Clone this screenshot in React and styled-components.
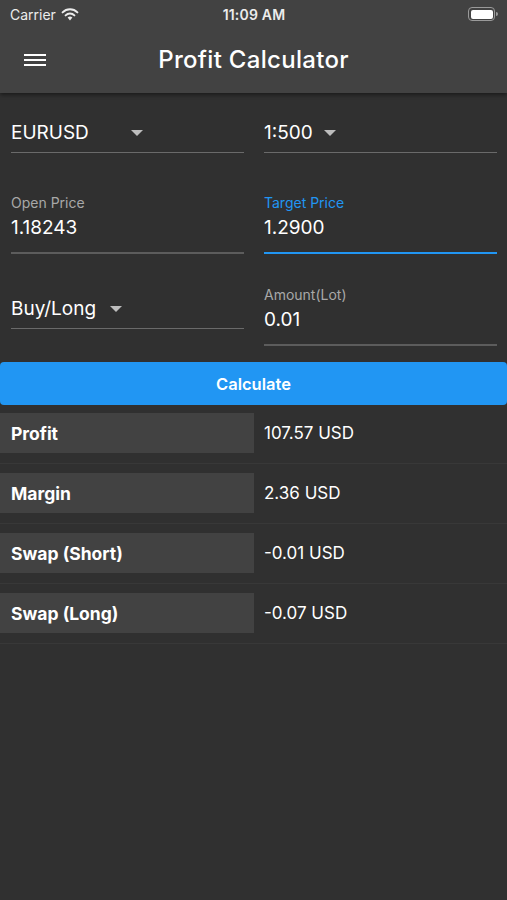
import React from 'react'
import styled, { createGlobalStyle } from 'styled-components'

const GlobalStyle = createGlobalStyle`
  html, body {
    margin: 0;
    padding: 0;
    background: #303030;
  }
  body {
    font-family: 'Inter', 'Roboto', sans-serif;
    color: #ffffff;
  }
`

const Screen = styled.div`
  width: 507px;
  min-height: 900px;
  background: #303030;
  display: flex;
  flex-direction: column;
`

const TopArea = styled.div`
  background: #424242;
  box-shadow: 0 2px 4px rgba(0, 0, 0, 0.45);
  position: relative;
  z-index: 1;
`

const StatusBar = styled.div`
  height: 28px;
  display: grid;
  grid-template-columns: 1fr auto 1fr;
  align-items: center;
  padding: 0 9px 0 10px;
  font-size: 14px;
  color: #ececec;
`

const Carrier = styled.div`
  display: flex;
  align-items: center;
  gap: 5px;
`

const Clock = styled.div`
  font-weight: 600;
  letter-spacing: 0.2px;
`

const Battery = styled.div`
  justify-self: end;
  display: flex;
  align-items: center;
`

const BatteryBody = styled.div`
  width: 22px;
  height: 9px;
  border: 1.5px solid #9a9a9a;
  border-radius: 4px;
  padding: 1.5px;
  display: flex;
`

const BatteryFill = styled.div`
  flex: 1;
  background: #ffffff;
  border-radius: 2px;
`

const BatteryNub = styled.div`
  width: 2px;
  height: 4px;
  margin-left: 1px;
  background: #9a9a9a;
  border-radius: 0 2px 2px 0;
`

const NavBar = styled.div`
  height: 65px;
  padding-bottom: 2px;
  box-sizing: border-box;
  display: grid;
  grid-template-columns: 70px 1fr 70px;
  align-items: center;
`

const MenuButton = styled.div`
  padding-left: 24px;
  display: flex;
  flex-direction: column;
  gap: 3px;

  span {
    display: block;
    width: 22px;
    height: 2px;
    background: #ffffff;
  }
`

const Title = styled.h1`
  margin: 0;
  text-align: center;
  font-size: 24px;
  font-weight: 500;
  letter-spacing: 0.3px;
  color: #ffffff;
`

const Form = styled.div`
  padding: 20px 10px 0 11px;
  display: flex;
  flex-direction: column;
`

const FieldRow = styled.div`
  display: grid;
  grid-template-columns: 1fr 1fr;
  column-gap: 20px;
  align-items: start;
  margin-top: ${({ gap }) => gap || 0}px;
`

const Select = styled.div`
  height: 39px;
  border-bottom: 1px solid #6a6a6a;
  display: flex;
  align-items: center;
  margin-top: ${({ offset }) => offset || 0}px;
  font-size: 19px;
  color: #ffffff;
`

const SelectText = styled.span`
  min-width: ${({ width }) => width}px;
`

const Caret = styled.span`
  margin-left: 8px;
  width: 0;
  height: 0;
  border-left: 6px solid transparent;
  border-right: 6px solid transparent;
  border-top: 6px solid #bdbdbd;
`

const TextField = styled.div`
  padding-bottom: 12px;
  border-bottom: 2px solid ${({ focused }) => (focused ? '#2196f3' : '#5c5c5c')};
  margin-top: ${({ offset }) => offset || 0}px;
`

const FieldLabel = styled.div`
  font-size: 14px;
  line-height: 17px;
  color: ${({ focused }) => (focused ? '#2196f3' : '#a8a8a8')};
`

const FieldValue = styled.div`
  margin-top: 5px;
  font-size: 19px;
  line-height: 24px;
  color: #ffffff;
`

const CalcButton = styled.button`
  margin-top: 16px;
  height: 43px;
  width: 100%;
  border: none;
  border-radius: 4px;
  background: #2196f3;
  color: #ffffff;
  font-family: 'Inter', 'Roboto', sans-serif;
  font-size: 16.5px;
  font-weight: 600;
  cursor: pointer;
`

const Results = styled.div`
  display: flex;
  flex-direction: column;
`

const ResultRow = styled.div`
  display: grid;
  grid-template-columns: 254px 1fr;
  align-items: center;
  padding: 8px 0 10px;
  border-bottom: 1px solid #383838;
  margin-bottom: 1px;
`

const ResultLabel = styled.div`
  height: 40px;
  background: #424242;
  display: flex;
  align-items: center;
  padding-left: 11px;
  font-size: 17.5px;
  font-weight: 700;
  color: #ffffff;
`

const ResultValue = styled.div`
  padding-left: 10px;
  font-size: 17px;
  color: #ffffff;
`

function WifiIcon() {
  return (
    <svg width="18" height="13" viewBox="0 0 18 13">
      <path d="M9 12.5 L6.6 9.6 A3.4 3.4 0 0 1 11.4 9.6 Z" fill="#ececec" />
      <path d="M4.6 7.4 A6.3 6.3 0 0 1 13.4 7.4" stroke="#ececec" strokeWidth="2" fill="none" strokeLinecap="round" />
      <path d="M1.6 4.4 A10.4 10.4 0 0 1 16.4 4.4" stroke="#ececec" strokeWidth="2" fill="none" strokeLinecap="round" />
    </svg>
  )
}

const results = [
  { label: 'Profit', value: '107.57 USD' },
  { label: 'Margin', value: '2.36 USD' },
  { label: 'Swap (Short)', value: '-0.01 USD' },
  { label: 'Swap (Long)', value: '-0.07 USD' },
]

export default function App() {
  return (
    <>
      <GlobalStyle />
      <Screen>
        <TopArea>
          <StatusBar>
            <Carrier>
              Carrier <WifiIcon />
            </Carrier>
            <Clock>11:09 AM</Clock>
            <Battery>
              <BatteryBody>
                <BatteryFill />
              </BatteryBody>
              <BatteryNub />
            </Battery>
          </StatusBar>
          <NavBar>
            <MenuButton>
              <span />
              <span />
              <span />
            </MenuButton>
            <Title>Profit Calculator</Title>
            <div />
          </NavBar>
        </TopArea>

        <Form>
          <FieldRow>
            <Select>
              <SelectText width={112}>EURUSD</SelectText>
              <Caret />
            </Select>
            <Select>
              <SelectText width={52}>1:500</SelectText>
              <Caret />
            </Select>
          </FieldRow>

          <FieldRow gap={41}>
            <TextField>
              <FieldLabel>Open Price</FieldLabel>
              <FieldValue>1.18243</FieldValue>
            </TextField>
            <TextField focused>
              <FieldLabel focused>Target Price</FieldLabel>
              <FieldValue>1.2900</FieldValue>
            </TextField>
          </FieldRow>

          <FieldRow gap={32}>
            <Select offset={3}>
              <SelectText width={91}>Buy/Long</SelectText>
              <Caret />
            </Select>
            <TextField>
              <FieldLabel>Amount(Lot)</FieldLabel>
              <FieldValue>0.01</FieldValue>
            </TextField>
          </FieldRow>
        </Form>

        <CalcButton>Calculate</CalcButton>

        <Results>
          {results.map((r) => (
            <ResultRow key={r.label}>
              <ResultLabel>{r.label}</ResultLabel>
              <ResultValue>{r.value}</ResultValue>
            </ResultRow>
          ))}
        </Results>
      </Screen>
    </>
  )
}
